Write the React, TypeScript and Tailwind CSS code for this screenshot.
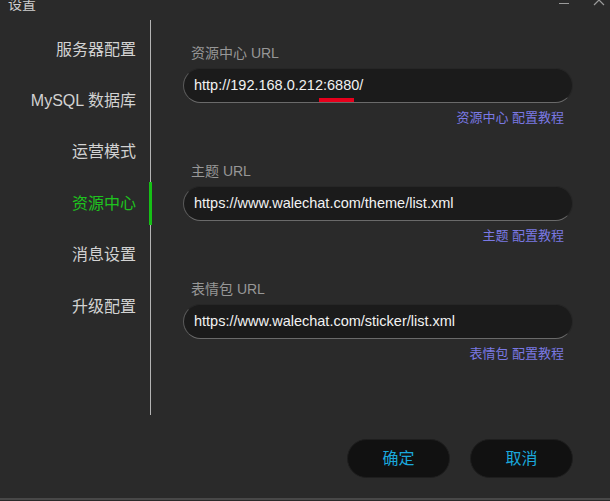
import React from "react";

const font = { fontFamily: '"Liberation Sans", "Noto Sans CJK SC", sans-serif' };

const menu = ["服务器配置", "MySQL 数据库", "运营模式", "资源中心", "消息设置", "升级配置"];

function Field({ label, value, link, mark }: { label: string; value: string; link: string; mark?: boolean }) {
  return (
    <div className="flex flex-col">
      <div className="h-[20px] pl-[8px] text-[14px] leading-[20px] text-[#979797]">{label}</div>
      <div className="relative mt-[5px] flex h-[35px] items-center rounded-full border border-[#262626] border-b-[#6a6a6a] border-l-[#5a5a5a] bg-[#1b1b1b] pl-[10px] text-[14.5px] text-[#f2f2f2]">
        {value}
        {mark && <span className="absolute left-[135px] top-[29px] h-[4px] w-[35px] bg-[#e8001c]" />}
      </div>
      <div className="mt-[6px] h-[18px] pr-[9px] text-right text-[13px] leading-[18px] text-[#7a79e4]">{link}</div>
    </div>
  );
}

export default function App() {
  return (
    <div style={font} className="flex h-[501px] w-[610px] flex-col overflow-hidden bg-[#2a2a2a]">
      <div className="flex h-[20px] items-start justify-between">
        <div className="-mt-[6px] pl-[8px] text-[14px] leading-[20px] text-[#cfcfcf]">设置</div>
        <div className="flex items-start">
          <span className="mt-[3px] h-[1px] w-[10px] bg-[#9a9a9a]" />
          <svg className="-mt-[1px] ml-[24px] mr-[5px]" width="12" height="7" viewBox="0 0 12 7" fill="none">
            <path d="M1 6 L6 1 L11 6" stroke="#9a9a9a" strokeWidth="1.2" />
          </svg>
        </div>
      </div>
      <div className="flex h-[395px]">
        <div className="flex w-[151px] flex-col items-end border-r border-[#b4b4b4] pt-[4px]">
          {menu.map((m) => {
            const active = m === "资源中心";
            return (
              <div
                key={m}
                className={`relative flex h-[51.4px] w-full items-center justify-end pr-[14px] text-[16px] ${active ? "text-[#1ec31e]" : "text-[#d2d2d2]"}`}
              >
                {m}
                {active && <span className="absolute right-[-2px] top-[4px] h-[43px] w-[3px] bg-[#16c016]" />}
              </div>
            );
          })}
        </div>
        <div className="flex w-[422px] flex-col gap-[34px] pl-[32px] pt-[23px]">
          <Field label="资源中心 URL" value="http://192.168.0.212:6880/" link="资源中心 配置教程" mark />
          <Field label="主题 URL" value="https://www.walechat.com/theme/list.xml" link="主题 配置教程" />
          <Field label="表情包 URL" value="https://www.walechat.com/sticker/list.xml" link="表情包 配置教程" />
        </div>
      </div>
      <div className="mt-[24px] flex justify-end gap-[20px] pr-[37px]">
        <button className="flex h-[39px] w-[103px] items-center justify-center rounded-full border border-[#1e1e1e] bg-[#111111] text-[16px] text-[#1aa8dc]">确定</button>
        <button className="flex h-[39px] w-[103px] items-center justify-center rounded-full border border-[#1e1e1e] bg-[#111111] text-[16px] text-[#1aa8dc]">取消</button>
      </div>
      <div className="mt-auto mb-[1px] h-[2px] bg-[#484848]" />
    </div>
  );
}
